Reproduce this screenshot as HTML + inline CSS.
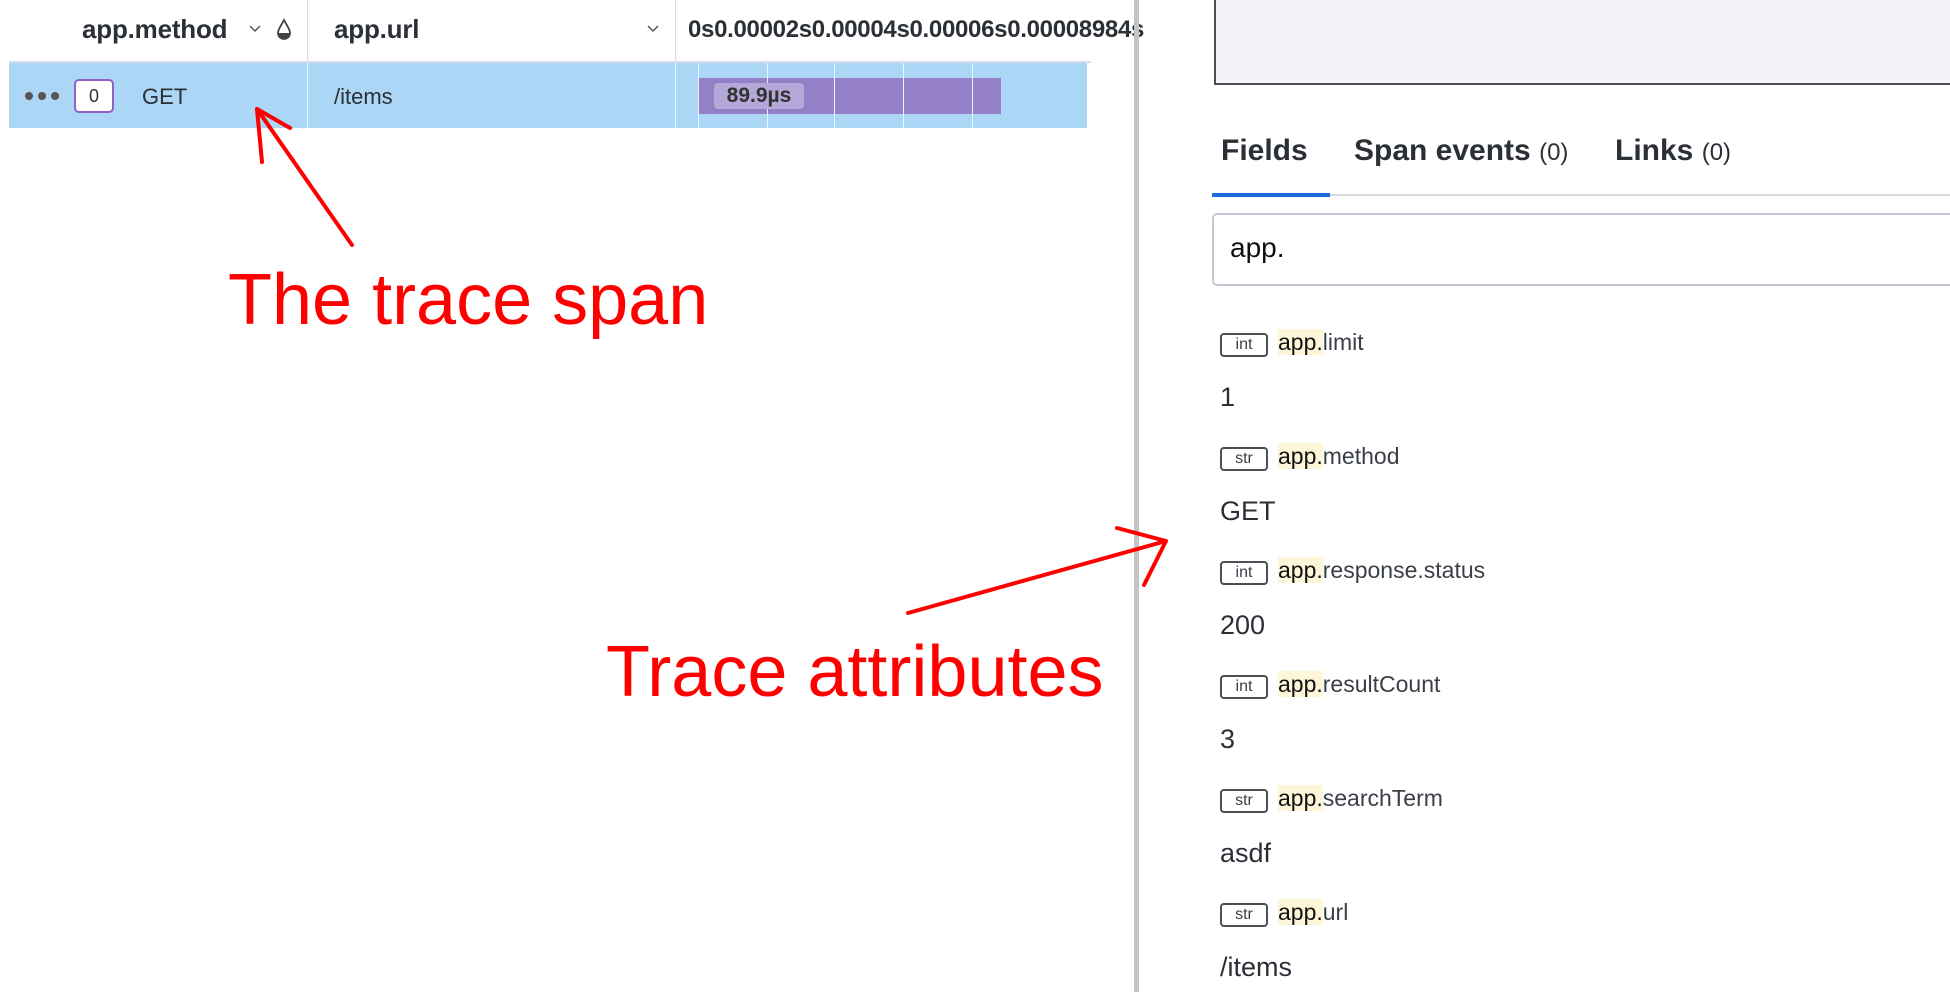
<!DOCTYPE html>
<html><head><meta charset="utf-8"><style>
body{margin:0;width:1950px;height:992px;background:#fff;position:relative;overflow:hidden;font-family:"Liberation Sans",sans-serif;color:#2b2f36}
.a{position:absolute;white-space:nowrap}
.hd{font-size:26px;font-weight:bold;color:#2b2f36;letter-spacing:-0.2px}
.badge{position:absolute;left:1220px;width:44px;height:20px;border:2px solid #4b5058;border-radius:4px;font-size:16px;line-height:20px;text-align:center;color:#3a3f47}
.lbl{position:absolute;left:1278px;font-size:23px;line-height:27px;color:#3a3f47}
.lbl b{font-weight:normal;background:#fdf6d8;color:#111}
.val{position:absolute;left:1220px;font-size:27px;color:#2b2f36}
.red{position:absolute;color:#ff0000;font-size:72px;white-space:nowrap}
</style></head><body>
<!-- header -->
<div class="a hd" style="left:82px;top:14px">app.method</div>
<svg class="a" style="left:248px;top:24px" width="14" height="10" viewBox="0 0 14 10"><path d="M2 2 L7 7 L12 2" fill="none" stroke="#555" stroke-width="1.5"/></svg>
<svg class="a" style="left:276px;top:18px" width="16" height="24" viewBox="0 0 16 24"><path d="M8 2 C5 8 2 11 2 15 A6 6 0 0 0 14 15 C14 11 11 8 8 2Z" fill="none" stroke="#444" stroke-width="1.8"/><path d="M2.3 15 H13.7 A5.7 5.7 0 0 1 2.3 15Z" fill="#444"/></svg>
<div class="a" style="left:307px;top:0;width:1px;height:62px;background:#d8dbe0"></div>
<div class="a hd" style="left:334px;top:14px">app.url</div>
<svg class="a" style="left:646px;top:24px" width="14" height="10" viewBox="0 0 14 10"><path d="M2 2 L7 7 L12 2" fill="none" stroke="#555" stroke-width="1.5"/></svg>
<div class="a" style="left:675px;top:0;width:1px;height:62px;background:#d8dbe0"></div>
<div class="a" style="left:688px;top:16px;font-size:24px;font-weight:bold;color:#2b2f36;letter-spacing:-0.3px">0s0.00002s0.00004s0.00006s0.00008984s</div>
<div class="a" style="left:9px;top:61px;width:1082px;height:2px;background:#d8dbe6"></div>
<!-- row -->
<div class="a" style="left:9px;top:63px;width:1078px;height:65px;background:#acd6f5"></div>
<div class="a" style="left:307px;top:63px;width:1px;height:65px;background:#e8f3fc"></div>
<div class="a" style="left:675px;top:63px;width:1px;height:65px;background:#e8f3fc"></div>
<div class="a" style="left:698px;top:78px;width:303px;height:36px;background:#9480c6"></div>
<div class="a" style="left:698px;top:63px;width:1px;height:65px;background:#e8f3fc"></div>
<div class="a" style="left:767px;top:63px;width:1px;height:65px;background:#e8f3fc"></div>
<div class="a" style="left:834px;top:63px;width:1px;height:65px;background:#e8f3fc"></div>
<div class="a" style="left:903px;top:63px;width:1px;height:65px;background:#e8f3fc"></div>
<div class="a" style="left:972px;top:63px;width:1px;height:65px;background:#e8f3fc"></div>
<div class="a" style="left:714px;top:83px;width:90px;height:26px;background:#b3a8d8;border-radius:4px;font-size:21px;font-weight:bold;line-height:26px;text-align:center;color:#333">89.9µs</div>
<svg class="a" style="left:24px;top:91px" width="40" height="10"><circle cx="5" cy="5" r="4" fill="#555"/><circle cx="18" cy="5" r="4" fill="#555"/><circle cx="31" cy="5" r="4" fill="#555"/></svg>
<div class="a" style="left:74px;top:79px;width:36px;height:30px;border:2px solid #8e63c4;border-radius:5px;background:#fff;font-size:18px;line-height:30px;text-align:center">0</div>
<div class="a" style="left:142px;top:84px;font-size:22px">GET</div>
<div class="a" style="left:334px;top:84px;font-size:22px">/items</div>
<!-- divider -->
<div class="a" style="left:1134px;top:0;width:5px;height:992px;background:#c4c4c4"></div>
<!-- right panel -->
<div class="a" style="left:1214px;top:-2px;width:760px;height:83px;background:#f3f4f8;border:2px solid #4b5058"></div>
<div class="a" style="left:1221px;top:134px;font-size:30px;font-weight:bold">Fields</div>
<div class="a" style="left:1354px;top:134px;font-size:30px;font-weight:bold">Span events <span style="font-weight:normal;font-size:24px">(0)</span></div>
<div class="a" style="left:1615px;top:134px;font-size:30px;font-weight:bold">Links <span style="font-weight:normal;font-size:24px">(0)</span></div>
<div class="a" style="left:1212px;top:194px;width:740px;height:2px;background:#d6dae2"></div>
<div class="a" style="left:1212px;top:193px;width:118px;height:4px;background:#1a6fdc"></div>
<div class="a" style="left:1212px;top:213px;width:760px;height:69px;border:2px solid #c3cad6;border-radius:5px"></div>
<div class="a" style="left:1230px;top:232px;font-size:28px;color:#111">app.</div>

<div class="badge" style="top:333px">int</div><div class="lbl" style="top:329px"><b>app.</b>limit</div><div class="val" style="top:382px">1</div>
<div class="badge" style="top:447px">str</div><div class="lbl" style="top:443px"><b>app.</b>method</div><div class="val" style="top:496px">GET</div>
<div class="badge" style="top:561px">int</div><div class="lbl" style="top:557px"><b>app.</b>response.status</div><div class="val" style="top:610px">200</div>
<div class="badge" style="top:675px">int</div><div class="lbl" style="top:671px"><b>app.</b>resultCount</div><div class="val" style="top:724px">3</div>
<div class="badge" style="top:789px">str</div><div class="lbl" style="top:785px"><b>app.</b>searchTerm</div><div class="val" style="top:838px">asdf</div>
<div class="badge" style="top:903px">str</div><div class="lbl" style="top:899px"><b>app.</b>url</div><div class="val" style="top:952px">/items</div>

<!-- annotations -->
<div class="red" style="left:228px;top:259px">The trace span</div>
<div class="red" style="left:606px;top:631px">Trace attributes</div>
<svg class="a" style="left:0;top:0" width="1950" height="992"><g stroke="#ff0000" stroke-width="4" fill="none" stroke-linecap="round">
<path d="M352 245 L257 109 M257 109 L262 162 M257 109 L290 128"/>
<path d="M908 613 L1166 541 M1166 541 L1117 528 M1166 541 L1144 585"/>
</g></svg>
</body></html>
